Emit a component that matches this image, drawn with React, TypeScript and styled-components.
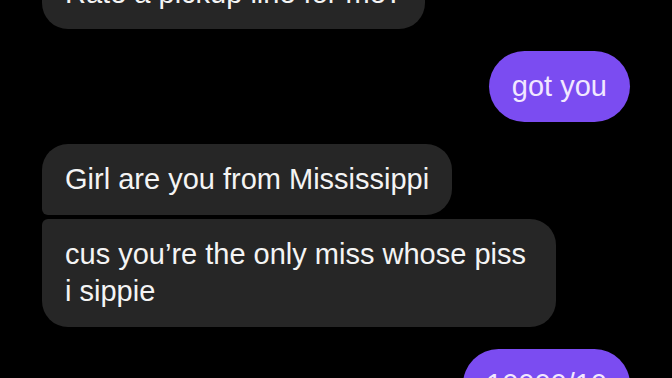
import React from "react";
import styled, { createGlobalStyle, css } from "styled-components";

const GlobalStyle = createGlobalStyle`
  html, body {
    margin: 0;
    padding: 0;
    background: #000;
  }
  body {
    font-family: "Liberation Sans", Arial, sans-serif;
  }
`;

const Chat = styled.main`
  height: 378px;
  width: 672px;
  box-sizing: border-box;
  padding: 0 42px;
  background: #000;
  overflow: hidden;
  display: flex;
  flex-direction: column;
  justify-content: center;
`;

const Group = styled.div<{ $mine?: boolean }>`
  display: flex;
  flex-direction: column;
  align-items: ${(p) => (p.$mine ? "flex-end" : "flex-start")};
  gap: 4px;
  flex-shrink: 0;
  & + & {
    margin-top: 22px;
  }
`;

type Pos = "single" | "first" | "last";

const Bubble = styled.div<{ $mine?: boolean; $pos: Pos }>`
  box-sizing: border-box;
  max-width: 514px;
  padding: 17px 23px;
  font-size: 29px;
  line-height: 37px;
  border-radius: 36px;
  ${(p) =>
    p.$mine
      ? css`
          background: #7b4cf1;
          color: #f1e8ff;
        `
      : css`
          background: #262626;
          color: #f4f4f4;
          border-radius: 26px;
        `}
  ${(p) =>
    p.$pos === "first" &&
    css`
      border-bottom-left-radius: 6px;
    `}
  ${(p) =>
    p.$pos === "last" &&
    css`
      border-top-left-radius: 6px;
    `}
`;

type Msg = { text: string; pos: Pos };
type G = { mine: boolean; messages: Msg[] };

const groups: G[] = [
  { mine: false, messages: [{ text: "Rate a pickup line for me?", pos: "single" }] },
  { mine: true, messages: [{ text: "got you", pos: "single" }] },
  {
    mine: false,
    messages: [
      { text: "Girl are you from Mississippi", pos: "first" },
      { text: "cus you\u2019re the only miss whose piss i sippie", pos: "last" },
    ],
  },
  { mine: true, messages: [{ text: "10000/10", pos: "single" }] },
];

export default function App() {
  return (
    <>
      <GlobalStyle />
      <Chat>
        {groups.map((g, i) => (
          <Group key={i} $mine={g.mine}>
            {g.messages.map((m, j) => (
              <Bubble key={j} $mine={g.mine} $pos={m.pos}>
                {m.text}
              </Bubble>
            ))}
          </Group>
        ))}
      </Chat>
    </>
  );
}
